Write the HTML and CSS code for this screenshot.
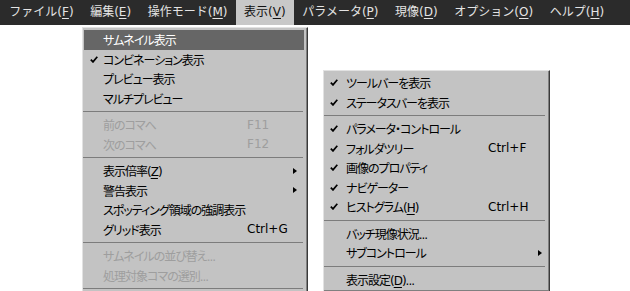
FILE: index.html
```html
<!DOCTYPE html>
<html lang="ja">
<head>
    <meta charset="UTF-8">
    <meta name="viewport" content="width=device-width, initial-scale=1.0">
    <title>表示メニュー</title>
    <link rel="stylesheet" href="styles.css">
</head>
<body>
    <!-- Menu bar -->
    <nav class="menubar">
        <span class="menubar-item">ファイル(<u>F</u>)</span>
        <span class="menubar-item">編集(<u>E</u>)</span>
        <span class="menubar-item">操作モード(<u>M</u>)</span>
        <span class="menubar-item is-open">表示(<u>V</u>)</span>
        <span class="menubar-item">パラメータ(<u>P</u>)</span>
        <span class="menubar-item">現像(<u>D</u>)</span>
        <span class="menubar-item">オプション(<u>O</u>)</span>
        <span class="menubar-item">ヘルプ(<u>H</u>)</span>
    </nav>

    <div class="menus">
        <!-- View menu -->
        <ul class="menu menu-view">
            <li class="menu-item is-active"><span class="mark"></span><span class="label">サムネイル表示</span></li>
            <li class="menu-item"><span class="mark"><svg width="8" height="7" viewBox="0 0 8 7"><path d="M0.8 3.6 L3 5.9 L7.3 0.8" fill="none" stroke="#000" stroke-width="1.7"/></svg></span><span class="label">コンビネーション表示</span></li>
            <li class="menu-item"><span class="mark"></span><span class="label">プレビュー表示</span></li>
            <li class="menu-item"><span class="mark"></span><span class="label">マルチプレビュー</span></li>
            <li class="menu-sep"></li>
            <li class="menu-item is-disabled"><span class="mark"></span><span class="label">前のコマへ</span><span class="key">F11</span></li>
            <li class="menu-item is-disabled"><span class="mark"></span><span class="label">次のコマへ</span><span class="key">F12</span></li>
            <li class="menu-sep"></li>
            <li class="menu-item"><span class="mark"></span><span class="label">表示倍率(<u>Z</u>)</span><span class="key"></span><span class="arrow"></span></li>
            <li class="menu-item"><span class="mark"></span><span class="label">警告表示</span><span class="key"></span><span class="arrow"></span></li>
            <li class="menu-item"><span class="mark"></span><span class="label">スポッティング領域の強調表示</span></li>
            <li class="menu-item"><span class="mark"></span><span class="label">グリッド表示</span><span class="key">Ctrl+G</span></li>
            <li class="menu-sep"></li>
            <li class="menu-item is-disabled"><span class="mark"></span><span class="label">サムネイルの並び替え...</span></li>
            <li class="menu-item is-disabled"><span class="mark"></span><span class="label">処理対象コマの選別...</span></li>
            <li class="menu-sep"></li>
        </ul>

        <!-- Window parts submenu -->
        <ul class="menu menu-panes">
            <li class="menu-item"><span class="mark"><svg width="8" height="7" viewBox="0 0 8 7"><path d="M0.8 3.6 L3 5.9 L7.3 0.8" fill="none" stroke="#000" stroke-width="1.7"/></svg></span><span class="label">ツールバーを表示</span></li>
            <li class="menu-item"><span class="mark"><svg width="8" height="7" viewBox="0 0 8 7"><path d="M0.8 3.6 L3 5.9 L7.3 0.8" fill="none" stroke="#000" stroke-width="1.7"/></svg></span><span class="label">ステータスバーを表示</span></li>
            <li class="menu-sep"></li>
            <li class="menu-item"><span class="mark"><svg width="8" height="7" viewBox="0 0 8 7"><path d="M0.8 3.6 L3 5.9 L7.3 0.8" fill="none" stroke="#000" stroke-width="1.7"/></svg></span><span class="label">パラメータ・コントロール</span></li>
            <li class="menu-item"><span class="mark"><svg width="8" height="7" viewBox="0 0 8 7"><path d="M0.8 3.6 L3 5.9 L7.3 0.8" fill="none" stroke="#000" stroke-width="1.7"/></svg></span><span class="label">フォルダツリー</span><span class="key">Ctrl+F</span></li>
            <li class="menu-item"><span class="mark"><svg width="8" height="7" viewBox="0 0 8 7"><path d="M0.8 3.6 L3 5.9 L7.3 0.8" fill="none" stroke="#000" stroke-width="1.7"/></svg></span><span class="label">画像のプロパティ</span></li>
            <li class="menu-item"><span class="mark"><svg width="8" height="7" viewBox="0 0 8 7"><path d="M0.8 3.6 L3 5.9 L7.3 0.8" fill="none" stroke="#000" stroke-width="1.7"/></svg></span><span class="label">ナビゲーター</span></li>
            <li class="menu-item"><span class="mark"><svg width="8" height="7" viewBox="0 0 8 7"><path d="M0.8 3.6 L3 5.9 L7.3 0.8" fill="none" stroke="#000" stroke-width="1.7"/></svg></span><span class="label">ヒストグラム(<u>H</u>)</span><span class="key">Ctrl+H</span></li>
            <li class="menu-sep"></li>
            <li class="menu-item"><span class="mark"></span><span class="label">バッチ現像状況...</span></li>
            <li class="menu-item"><span class="mark"></span><span class="label">サブコントロール</span><span class="key"></span><span class="arrow"></span></li>
            <li class="menu-sep"></li>
            <li class="menu-item"><span class="mark"></span><span class="label">表示設定(<u>D</u>)...</span></li>
        </ul>
    </div>
</body>
</html>
```

FILE: styles.css
```css
/* Basic styling */
* {
    box-sizing: border-box;
}

html,
body {
    margin: 0;
}

body {
    width: 630px;
    height: 291px;
    overflow: hidden;
    background-color: #fff;
    font-family: "DejaVu Sans", "Noto Sans CJK JP", sans-serif;
    font-size: 12px;
    font-feature-settings: "palt";
    color: #000;
}

u {
    text-decoration-thickness: 1px;
    text-underline-offset: 2px;
}

/* Menu bar */
.menubar {
    display: flex;
    height: 25px;
    padding-left: 1px;
    background-color: #2b2b2b;
}

.menubar-item {
    padding: 0 8.3px;
    line-height: 25px;
    color: #e4e4e4;
    font-feature-settings: normal;
}

.menubar-item.is-open {
    background-color: #c8c8c8;
    color: #111;
}

/* Dropdown menus */
.menus {
    display: flex;
    align-items: flex-start;
    gap: 15px;
    margin-top: 2px;
    padding-left: 82px;
}

.menu {
    list-style: none;
    margin: 0;
    padding: 2px 0;
    background-color: #c3c3c3;
    border: 1px solid;
    border-color: #e2e2e2 #3a3a3a #3a3a3a #e2e2e2;
    box-shadow: inset -1px -1px 0 #808080;
}

.menu-view {
    width: 226px;
}

.menu-panes {
    width: 227px;
    margin-top: 43px;
}

.menu-item {
    display: flex;
    align-items: center;
    height: 19.5px;
    margin: 0 3px 0 1px;
    white-space: nowrap;
}

.menu-item.is-active {
    background-color: #666;
    color: #fff;
}

.menu-item.is-disabled {
    color: #9e9e9e;
}

.mark {
    display: flex;
    align-items: center;
    width: 19px;
    padding-left: 6px;
}

.menu-panes .mark {
    width: 21px;
    padding-left: 5px;
}

.label {
    width: 144px;
    letter-spacing: -1px;
}

.menu-panes .label {
    width: 142px;
}

.key {
    flex: 1;
}

.arrow {
    width: 0;
    height: 0;
    margin-right: 7px;
    border-left: 4px solid #000;
    border-top: 3.5px solid transparent;
    border-bottom: 3.5px solid transparent;
}

.menu-panes .arrow {
    margin-right: 4px;
}

.menu-sep {
    height: 7px;
    margin: 0 4px 0 0;
    border-top: 3px solid transparent;
    background-clip: content-box;
    background-color: #7c7c7c;
    border-bottom: 3px solid transparent;
}
```
